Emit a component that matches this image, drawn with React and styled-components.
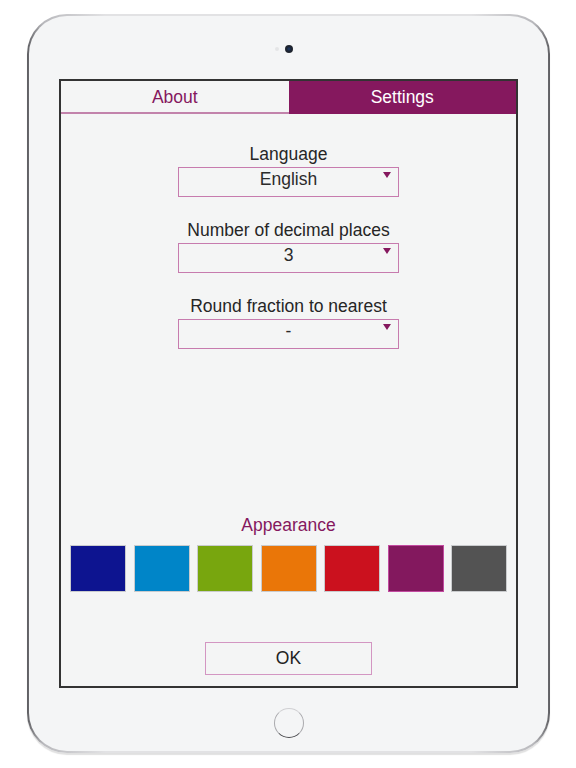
import React from "react";
import styled, { createGlobalStyle } from "styled-components";

const Global = createGlobalStyle`
  html, body { margin: 0; padding: 0; background: #ffffff; }
  body { font-family: "Liberation Sans", Arial, sans-serif; }
`;

const Page = styled.div`
  width: 576px;
  height: 768px;
  padding: 14px 0 0 27px;
  box-sizing: border-box;
`;

const DeviceEdge = styled.div`
  width: 523px;
  height: 739px;
  box-sizing: border-box;
  border-radius: 40px;
  padding: 2px;
  background: linear-gradient(90deg, #5e5e62 0%, #b8b8bc 3%, #e2e2e4 15%, #e2e2e4 85%, #b8b8bc 97%, #5e5e62 100%);
  box-shadow: 0 2px 1px rgba(0,0,0,0.12);
`;

const Device = styled.div`
  width: 100%;
  height: 100%;
  box-sizing: border-box;
  border-radius: 38px;
  background: #f4f5f6;
  display: flex;
  flex-direction: column;
  align-items: center;
  padding-top: 28px;
`;

const CameraRow = styled.div`
  display: flex;
  align-items: center;
  gap: 6px;
  height: 10px;
  margin-left: -10px;
`;

const Sensor = styled.div`
  width: 4px;
  height: 4px;
  border-radius: 50%;
  background: #e4e5e7;
`;

const Camera = styled.div`
  width: 8px;
  height: 8px;
  border-radius: 50%;
  background: radial-gradient(circle at 50% 50%, #1e3a6a 0%, #1a2232 40%, #2b2b2b 100%);
`;

const Screen = styled.div`
  margin-top: 25px;
  width: 459px;
  height: 609px;
  box-sizing: border-box;
  border: 2px solid #333333;
  background: #f4f5f5;
  display: flex;
  flex-direction: column;
`;

const Tabs = styled.div`
  display: flex;
  height: 33px;
`;

const Tab = styled.div`
  flex: 1;
  display: flex;
  align-items: center;
  justify-content: center;
  font-size: 17.5px;
  box-sizing: border-box;
  padding-top: 1px;
  color: ${p => (p.$active ? "#ffffff" : "#85185e")};
  background: ${p => (p.$active ? "#85185e" : "#f4f5f5")};
  border-bottom: 2px solid ${p => (p.$active ? "#85185e" : "#c283ab")};
`;

const Body = styled.div`
  flex: 1;
  display: flex;
  flex-direction: column;
  align-items: center;
  padding: 30px 0 11px;
`;

const Field = styled.div`
  display: flex;
  flex-direction: column;
  align-items: center;
  margin-bottom: 23px;
`;

const Label = styled.div`
  font-size: 17.5px;
  line-height: 20px;
  color: ${p => (p.$accent ? "#85185e" : "#262626")};
`;

const Select = styled.div`
  position: relative;
  margin-top: 3px;
  width: 221px;
  height: 30px;
  box-sizing: border-box;
  border: 1px solid #c77bae;
  display: flex;
  align-items: flex-start;
  justify-content: center;
  padding-top: 1px;
  font-size: 17.5px;
  line-height: 20px;
  color: #2b2b2b;
`;

const Arrow = styled.div`
  position: absolute;
  right: 7px;
  top: 4px;
  width: 0;
  height: 0;
  border-left: 4px solid transparent;
  border-right: 4px solid transparent;
  border-top: 6px solid #85185e;
`;

const Spacer = styled.div`
  flex: 1;
`;

const Swatches = styled.div`
  display: flex;
  gap: 7.5px;
  margin-top: 10px;
`;

const Swatch = styled.div`
  width: 56px;
  height: 47px;
  box-sizing: border-box;
  background: ${p => p.$color};
  border: 1px solid ${p => (p.$selected ? "#c24aa0" : "#c9cbcd")};
`;

const OkButton = styled.div`
  margin-top: 50px;
  width: 167px;
  height: 33px;
  box-sizing: border-box;
  border: 1px solid #d396c2;
  display: flex;
  align-items: center;
  justify-content: center;
  font-size: 17.5px;
  color: #222;
`;

const HomeButton = styled.div`
  margin-top: 20px;
  width: 30px;
  height: 30px;
  box-sizing: border-box;
  border-radius: 50%;
  border: 1.5px solid #a9a9ad;
  border-bottom-color: #4a4a4e;
  border-top-color: #d0d0d3;
`;

const colors = ["#0d1490", "#0085c8", "#78a60e", "#ea7608", "#cb111e", "#83185e", "#535353"];

const fields = [
  { label: "Language", value: "English" },
  { label: "Number of decimal places", value: "3" },
  { label: "Round fraction to nearest", value: "-" },
];

export default function App() {
  return (
    <>
      <Global />
      <Page>
        <DeviceEdge>
          <Device>
            <CameraRow>
              <Sensor />
              <Camera />
            </CameraRow>
            <Screen>
              <Tabs>
                <Tab>About</Tab>
                <Tab $active>Settings</Tab>
              </Tabs>
              <Body>
                {fields.map(f => (
                  <Field key={f.label}>
                    <Label>{f.label}</Label>
                    <Select>
                      {f.value}
                      <Arrow />
                    </Select>
                  </Field>
                ))}
                <Spacer />
                <Label $accent>Appearance</Label>
                <Swatches>
                  {colors.map(c => (
                    <Swatch key={c} $color={c} $selected={c === "#83185e"} />
                  ))}
                </Swatches>
                <OkButton>OK</OkButton>
              </Body>
            </Screen>
            <HomeButton />
          </Device>
        </DeviceEdge>
      </Page>
    </>
  );
}
